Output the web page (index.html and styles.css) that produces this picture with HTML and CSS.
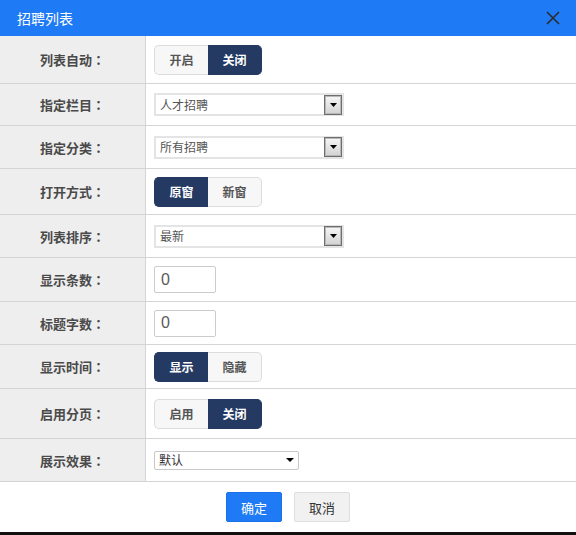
FILE: index.html
```html
<!DOCTYPE html>
<html lang="zh-CN">
<head>
<meta charset="utf-8">
<title>招聘列表</title>
<link rel="stylesheet" href="styles.css">
</head>
<body>
<div class="dialog">
  <div class="header">
    <span class="title">招聘列表</span>
    <svg class="close" width="14" height="14" viewBox="0 0 14 14"><path d="M1 1 L13 13 M13 1 L1 13" stroke="#2b2b2b" stroke-width="1.6" fill="none"/></svg>
  </div>
  <div class="form">
    <div class="row">
      <div class="label">列表自动<span class="colon">：</span></div>
      <div class="field"><div class="toggle"><span class="opt">开启</span><span class="opt on">关闭</span></div></div>
    </div>
    <div class="row">
      <div class="label">指定栏目<span class="colon">：</span></div>
      <div class="field"><div class="select"><span class="sel-text">人才招聘</span><span class="sel-btn"><svg width="7" height="4" viewBox="0 0 7 4"><path d="M0 0 H7 L3.5 4 Z" fill="#000"/></svg></span></div></div>
    </div>
    <div class="row">
      <div class="label">指定分类<span class="colon">：</span></div>
      <div class="field"><div class="select"><span class="sel-text">所有招聘</span><span class="sel-btn"><svg width="7" height="4" viewBox="0 0 7 4"><path d="M0 0 H7 L3.5 4 Z" fill="#000"/></svg></span></div></div>
    </div>
    <div class="row">
      <div class="label">打开方式<span class="colon">：</span></div>
      <div class="field"><div class="toggle"><span class="opt on">原窗</span><span class="opt">新窗</span></div></div>
    </div>
    <div class="row">
      <div class="label">列表排序<span class="colon">：</span></div>
      <div class="field"><div class="select"><span class="sel-text">最新</span><span class="sel-btn"><svg width="7" height="4" viewBox="0 0 7 4"><path d="M0 0 H7 L3.5 4 Z" fill="#000"/></svg></span></div></div>
    </div>
    <div class="row">
      <div class="label">显示条数<span class="colon">：</span></div>
      <div class="field"><div class="input">0</div></div>
    </div>
    <div class="row">
      <div class="label">标题字数<span class="colon">：</span></div>
      <div class="field"><div class="input">0</div></div>
    </div>
    <div class="row">
      <div class="label">显示时间<span class="colon">：</span></div>
      <div class="field"><div class="toggle"><span class="opt on">显示</span><span class="opt">隐藏</span></div></div>
    </div>
    <div class="row">
      <div class="label">启用分页<span class="colon">：</span></div>
      <div class="field"><div class="toggle"><span class="opt">启用</span><span class="opt on">关闭</span></div></div>
    </div>
    <div class="row">
      <div class="label">展示效果<span class="colon">：</span></div>
      <div class="field"><div class="select2"><span class="sel-text">默认</span><svg class="tri" width="8" height="4" viewBox="0 0 8 4"><path d="M0 0 H8 L4 4 Z" fill="#000"/></svg></div></div>
    </div>
  </div>
  <div class="footer">
    <span class="btn primary">确定</span>
    <span class="btn">取消</span>
  </div>
</div>
</body>
</html>
```
FILE: styles.css
```css
* { box-sizing: border-box; }
html, body { margin: 0; padding: 0; }
body {
  background: #111;
  width: 576px;
  height: 535px;
  overflow: hidden;
  font-family: "Noto Sans CJK SC", "Liberation Sans", sans-serif;
}
.dialog {
  width: 576px;
  height: 532px;
  background: #fff;
  display: flex;
  flex-direction: column;
}
.header {
  height: 36px;
  background: #1e7af5;
  display: flex;
  align-items: center;
  justify-content: space-between;
  padding: 0 16px 0 17px;
}
.title {
  color: #fff;
  font-size: 14px;
  line-height: 1;
}
.close { display: block; }
.form { display: flex; flex-direction: column; }
.row {
  display: flex;
  border-bottom: 1px solid #d4d4d4;
}
.row:nth-child(1) { height: 48px; }
.row:nth-child(2) { height: 42px; }
.row:nth-child(3) { height: 43px; }
.row:nth-child(4) { height: 46px; }
.row:nth-child(5) { height: 43px; }
.row:nth-child(6) { height: 44px; }
.row:nth-child(7) { height: 43px; }
.row:nth-child(8) { height: 44px; }
.row:nth-child(9) { height: 50px; }
.row:nth-child(10) { height: 43px; }
.label {
  width: 146px;
  flex: none;
  background: #eeeeee;
  border-right: 1px solid #d4d4d4;
  display: flex;
  align-items: center;
  justify-content: flex-end;
  padding-right: 40px;
  font-size: 13px;
  font-weight: bold;
  color: #4a4a4a;
}
.colon { font-family: "Noto Sans CJK JP", "Noto Sans CJK SC", sans-serif; }
.field {
  flex: 1;
  display: flex;
  align-items: center;
  padding-left: 8px;
}
.toggle {
  display: flex;
  height: 30px;
  width: 108px;
}
.opt {
  width: 54px;
  display: flex;
  align-items: center;
  justify-content: center;
  font-size: 12px;
  font-weight: bold;
  color: #555;
  background: #f7f7f7;
  border: 1px solid #dcdcdc;
}
.opt:first-child { border-radius: 5px 0 0 5px; border-right: none; }
.opt:last-child { border-radius: 0 5px 5px 0; border-left: none; }
.opt.on {
  background: #243a63;
  border-color: #243a63;
  color: #fff;
}
.select {
  width: 190px;
  height: 23px;
  border: 2px solid #e4e4e4;
  display: flex;
  align-items: center;
  justify-content: space-between;
  background: #fff;
}
.sel-text {
  font-size: 12px;
  color: #555;
  padding-left: 4px;
  line-height: 1;
}
.sel-btn {
  width: 18px;
  height: 20px;
  border: 1px solid #6e6e6e;
  box-shadow: inset 0 0 0 1px #b8b8b8;
  background: linear-gradient(#f6f6f6, #d2d2d2);
  display: flex;
  align-items: center;
  justify-content: center;
}
.sel-btn svg { display: block; }
.input {
  width: 62px;
  height: 27px;
  border: 1px solid #cccccc;
  border-radius: 2px;
  font-family: "Liberation Sans", "Noto Sans CJK SC", sans-serif;
  font-size: 16px;
  color: #5a5a5a;
  display: flex;
  align-items: center;
  padding-left: 6px;
}
.select2 {
  width: 145px;
  height: 19px;
  border: 1px solid #c8c8c8;
  border-radius: 2px;
  display: flex;
  align-items: center;
  justify-content: space-between;
  padding-right: 4px;
}
.select2 .sel-text { color: #333; padding-left: 4px; }
.tri { display: block; }
.footer {
  flex: 1;
  display: flex;
  align-items: center;
  justify-content: center;
  gap: 12px;
}
.btn {
  width: 56px;
  height: 30px;
  display: flex;
  align-items: center;
  justify-content: center;
  font-size: 13px;
  color: #333;
  background: #f1f1f1;
  border: 1px solid #dedede;
  border-radius: 2px;
}
.btn.primary {
  background: #1e7af5;
  border-color: #1a70e6;
  color: #fff;
}
```
